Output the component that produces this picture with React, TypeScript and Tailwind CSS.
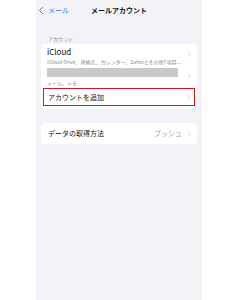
import React from 'react';

const Chevron = ({ className = '' }: { className?: string }) => (
  <svg viewBox="0 0 6 10" className={`w-[3px] h-[6px] ${className}`} fill="none" stroke="#c4c4c7" strokeWidth={1.6} strokeLinecap="round" strokeLinejoin="round">
    <path d="M1 1l4 4-4 4" />
  </svg>
);

export default function App() {
  return (
    <div className="w-[240px] h-[300px] bg-white flex" style={{ fontFamily: '"Noto Sans CJK JP", "Noto Sans", sans-serif' }}>
      <div className="ml-[36px] w-[166px] h-full bg-[#f2f2f7] flex flex-col">
        {/* ナビゲーションバー */}
        <div className="relative h-[21px] flex items-center">
          <div className="flex items-center pl-[3px] text-[#3478f6] text-[7px] leading-none">
            <svg viewBox="0 0 8 14" className="w-[4px] h-[7px] mr-[5px]" fill="none" stroke="#3478f6" strokeWidth={2} strokeLinecap="round" strokeLinejoin="round">
              <path d="M7 1L1 7l6 6" />
            </svg>
            <span>メール</span>
          </div>
          <div className="absolute inset-0 flex items-center justify-center text-[7px] font-bold text-[#111] leading-none">
            メールアカウント
          </div>
        </div>

        {/* アカウント */}
        <div className="mt-[15px] pl-[12px] text-[5px] text-[#8e8e93] leading-none">アカウント</div>
        <div className="mt-[3px] mx-[5px] bg-white rounded-[4px] overflow-hidden">
          <div className="pl-[6px] pr-[6px] pt-[2px]">
            <div className="flex items-center justify-between">
              <span className="text-[8px] leading-[12px] text-[#111]">iCloud</span>
              <Chevron className="translate-y-[2px]" />
            </div>
            <div className="text-[5px] leading-[7px] text-[#8e8e93] whitespace-nowrap overflow-hidden text-ellipsis">
              iCloud Drive、連絡先、カレンダー、Safariとその他7項目...
            </div>
          </div>
          <div className="pl-[6px] pr-[6px] pt-[3px] pb-[2px]">
            <div className="flex items-center justify-between h-[9px]">
              <div className="w-[131px] h-[9px] bg-[#c9c9c9]" />
              <Chevron className="translate-y-[3px]" />
            </div>
            <div className="mt-[3px] text-[5px] leading-[6px] text-[#8e8e93]">メール、メモ</div>
          </div>
          <div className="mx-[2px] mb-[3px] h-[18px] border-[1.5px] border-[#d8141f] flex items-center justify-between pl-[4px] pr-[4px]">
            <span className="text-[7px] leading-none text-[#111]">アカウントを追加</span>
            <Chevron />
          </div>
        </div>

        {/* データの取得方法 */}
        <div className="mt-[14px] mx-[5px] h-[21px] bg-white rounded-[4px] flex items-center justify-between pl-[7px] pr-[6px]">
          <span className="text-[7px] leading-none text-[#111]">データの取得方法</span>
          <div className="flex items-center gap-[6px]">
            <span className="text-[7px] leading-none text-[#a0a0a5]">プッシュ</span>
            <Chevron />
          </div>
        </div>
      </div>
    </div>
  );
}
